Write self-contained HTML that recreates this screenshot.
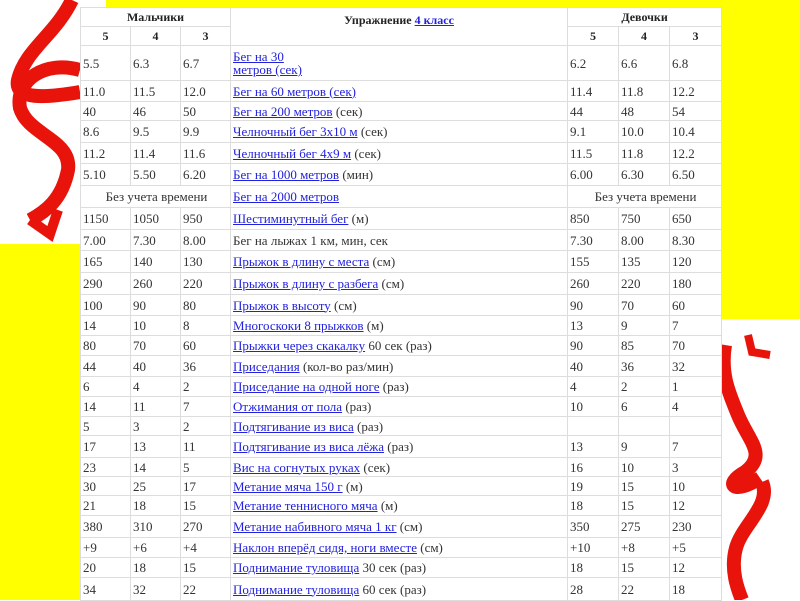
<!DOCTYPE html>
<html><head><meta charset="utf-8"><style>
body{margin:0;width:800px;height:600px;overflow:hidden;position:relative;background:#fff;font-family:"Liberation Serif",serif;}
.y{position:absolute;background:#ffff00}
table{position:absolute;left:80px;top:7px;width:641px;border-collapse:collapse;table-layout:fixed;background:#fff;font-size:13px;color:#333}
td{border:1px solid #ddd;padding:0 0 0 2px;vertical-align:middle;white-space:nowrap;overflow:hidden;line-height:13px}
th{border:1px solid #ddd;font-size:12px;color:#222;padding:0;font-weight:bold}
a{color:#2222dd;text-decoration:underline}
.c{text-align:center}
</style></head><body>
<div class="y" style="left:106px;top:0;width:614px;height:7px"></div>
<div class="y" style="left:0;top:244px;width:80px;height:356px"></div>
<div class="y" style="left:720px;top:0;width:80px;height:319px"></div>
<svg style="position:absolute;left:0;top:0" width="800" height="600">
<g fill="none" stroke="#e8140c" stroke-linecap="butt">
<path d="M72 0 C55 35 25 50 18 80 C14 100 45 98 80 92" stroke-width="14"/>
<path d="M80 70 C45 60 15 80 20 108 C28 135 72 140 68 170 C62 200 45 212 30 220" stroke-width="14"/>
<path d="M30 220 L50 234 L58 210" stroke-width="10"/>
<path d="M748 335 L752 352 L770 355" stroke-width="8"/>
<path d="M725 345 C720 375 730 395 738 415 C748 440 768 455 745 472 C722 485 735 495 760 478" stroke-width="14"/>
<path d="M762 482 C772 505 742 525 736 548 C730 570 738 590 742 600" stroke-width="14"/>
</g>
</svg>
<table>
<colgroup><col style="width:50px"><col style="width:50px"><col style="width:50px"><col style="width:337px"><col style="width:51px"><col style="width:51px"><col style="width:52px"></colgroup>
<tr style="height:19px"><th colspan="3">Мальчики</th><th rowspan="2" style="vertical-align:top;padding-top:5px">Упражнение <a>4 класс</a></th><th colspan="3">Девочки</th></tr>
<tr style="height:19px"><th>5</th><th>4</th><th>3</th><th>5</th><th>4</th><th>3</th></tr>
<tr style="height:35px"><td>5.5</td><td>6.3</td><td>6.7</td><td><a>Бег на 30<br>метров (сек)</a></td><td>6.2</td><td>6.6</td><td>6.8</td></tr>
<tr style="height:21px"><td>11.0</td><td>11.5</td><td>12.0</td><td><a>Бег на 60 метров (сек)</a></td><td>11.4</td><td>11.8</td><td>12.2</td></tr>
<tr style="height:19px"><td>40</td><td>46</td><td>50</td><td><a>Бег на 200 метров</a> (сек)</td><td>44</td><td>48</td><td>54</td></tr>
<tr style="height:22px"><td>8.6</td><td>9.5</td><td>9.9</td><td><a>Челночный бег 3х10 м</a> (сек)</td><td>9.1</td><td>10.0</td><td>10.4</td></tr>
<tr style="height:21px"><td>11.2</td><td>11.4</td><td>11.6</td><td><a>Челночный бег 4х9 м</a> (сек)</td><td>11.5</td><td>11.8</td><td>12.2</td></tr>
<tr style="height:22px"><td>5.10</td><td>5.50</td><td>6.20</td><td><a>Бег на 1000 метров</a> (мин)</td><td>6.00</td><td>6.30</td><td>6.50</td></tr>
<tr style="height:22px"><td colspan="3" class="c">Без учета времени</td><td><a>Бег на 2000 метров</a></td><td colspan="3" class="c">Без учета времени</td></tr>
<tr style="height:22px"><td>1150</td><td>1050</td><td>950</td><td><a>Шестиминутный бег</a> (м)</td><td>850</td><td>750</td><td>650</td></tr>
<tr style="height:21px"><td>7.00</td><td>7.30</td><td>8.00</td><td>Бег на лыжах 1 км, мин, сек</td><td>7.30</td><td>8.00</td><td>8.30</td></tr>
<tr style="height:22px"><td>165</td><td>140</td><td>130</td><td><a>Прыжок в длину с места</a> (см)</td><td>155</td><td>135</td><td>120</td></tr>
<tr style="height:22px"><td>290</td><td>260</td><td>220</td><td><a>Прыжок в длину с разбега</a> (см)</td><td>260</td><td>220</td><td>180</td></tr>
<tr style="height:21px"><td>100</td><td>90</td><td>80</td><td><a>Прыжок в высоту</a> (см)</td><td>90</td><td>70</td><td>60</td></tr>
<tr style="height:20px"><td>14</td><td>10</td><td>8</td><td><a>Многоскоки 8 прыжков</a> (м)</td><td>13</td><td>9</td><td>7</td></tr>
<tr style="height:20px"><td>80</td><td>70</td><td>60</td><td><a>Прыжки через скакалку</a> 60 сек (раз)</td><td>90</td><td>85</td><td>70</td></tr>
<tr style="height:21px"><td>44</td><td>40</td><td>36</td><td><a>Приседания</a> (кол-во раз/мин)</td><td>40</td><td>36</td><td>32</td></tr>
<tr style="height:20px"><td>6</td><td>4</td><td>2</td><td><a>Приседание на одной ноге</a> (раз)</td><td>4</td><td>2</td><td>1</td></tr>
<tr style="height:20px"><td>14</td><td>11</td><td>7</td><td><a>Отжимания от пола</a> (раз)</td><td>10</td><td>6</td><td>4</td></tr>
<tr style="height:19px"><td>5</td><td>3</td><td>2</td><td><a>Подтягивание из виса</a> (раз)</td><td></td><td></td><td></td></tr>
<tr style="height:22px"><td>17</td><td>13</td><td>11</td><td><a>Подтягивание из виса лёжа</a> (раз)</td><td>13</td><td>9</td><td>7</td></tr>
<tr style="height:19px"><td>23</td><td>14</td><td>5</td><td><a>Вис на согнутых руках</a> (сек)</td><td>16</td><td>10</td><td>3</td></tr>
<tr style="height:19px"><td>30</td><td>25</td><td>17</td><td><a>Метание мяча 150 г</a> (м)</td><td>19</td><td>15</td><td>10</td></tr>
<tr style="height:20px"><td>21</td><td>18</td><td>15</td><td><a>Метание теннисного мяча</a> (м)</td><td>18</td><td>15</td><td>12</td></tr>
<tr style="height:22px"><td>380</td><td>310</td><td>270</td><td><a>Метание набивного мяча 1 кг</a> (см)</td><td>350</td><td>275</td><td>230</td></tr>
<tr style="height:20px"><td>+9</td><td>+6</td><td>+4</td><td><a>Наклон вперёд сидя, ноги вместе</a> (см)</td><td>+10</td><td>+8</td><td>+5</td></tr>
<tr style="height:20px"><td>20</td><td>18</td><td>15</td><td><a>Поднимание туловища</a> 30 сек (раз)</td><td>18</td><td>15</td><td>12</td></tr>
<tr style="height:23px"><td>34</td><td>32</td><td>22</td><td><a>Поднимание туловища</a> 60 сек (раз)</td><td>28</td><td>22</td><td>18</td></tr>
</table>
</body></html>
